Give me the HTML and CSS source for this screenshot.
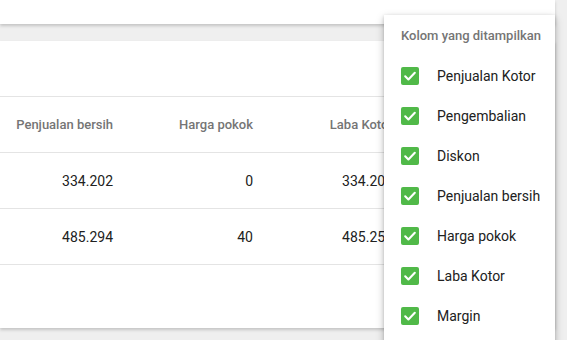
FILE: index.html
```
<!DOCTYPE html>
<html>
<head>
<meta charset="utf-8">
<link rel="stylesheet" href="styles.css">
</head>
<body>
<div class="page">
  <div class="topcard"><span class="toptext">31 Mar</span></div>
  <div class="card">
    <div class="cardhead"></div>
    <div class="row head">
      <div class="cell first">Penjualan bersih</div>
      <div class="cell">Harga pokok</div>
      <div class="cell">Laba Kotor</div>
    </div>
    <div class="row">
      <div class="cell first">334.202</div>
      <div class="cell">0</div>
      <div class="cell">334.202</div>
    </div>
    <div class="row">
      <div class="cell first">485.294</div>
      <div class="cell">40</div>
      <div class="cell">485.254</div>
    </div>
  </div>
</div>
<div class="menu">
  <div class="menutitle">Kolom yang ditampilkan</div>
  <div class="item"><span class="cb"><svg viewBox="0 0 18 18" width="18" height="18"><path d="M4.2 9.3l3.2 3.1 6.4-6.6" fill="none" stroke="#fff" stroke-width="2.1" stroke-linecap="round" stroke-linejoin="round"/></svg></span><span>Penjualan Kotor</span></div>
  <div class="item"><span class="cb"><svg viewBox="0 0 18 18" width="18" height="18"><path d="M4.2 9.3l3.2 3.1 6.4-6.6" fill="none" stroke="#fff" stroke-width="2.1" stroke-linecap="round" stroke-linejoin="round"/></svg></span><span>Pengembalian</span></div>
  <div class="item"><span class="cb"><svg viewBox="0 0 18 18" width="18" height="18"><path d="M4.2 9.3l3.2 3.1 6.4-6.6" fill="none" stroke="#fff" stroke-width="2.1" stroke-linecap="round" stroke-linejoin="round"/></svg></span><span>Diskon</span></div>
  <div class="item"><span class="cb"><svg viewBox="0 0 18 18" width="18" height="18"><path d="M4.2 9.3l3.2 3.1 6.4-6.6" fill="none" stroke="#fff" stroke-width="2.1" stroke-linecap="round" stroke-linejoin="round"/></svg></span><span>Penjualan bersih</span></div>
  <div class="item"><span class="cb"><svg viewBox="0 0 18 18" width="18" height="18"><path d="M4.2 9.3l3.2 3.1 6.4-6.6" fill="none" stroke="#fff" stroke-width="2.1" stroke-linecap="round" stroke-linejoin="round"/></svg></span><span>Harga pokok</span></div>
  <div class="item"><span class="cb"><svg viewBox="0 0 18 18" width="18" height="18"><path d="M4.2 9.3l3.2 3.1 6.4-6.6" fill="none" stroke="#fff" stroke-width="2.1" stroke-linecap="round" stroke-linejoin="round"/></svg></span><span>Laba Kotor</span></div>
  <div class="item"><span class="cb"><svg viewBox="0 0 18 18" width="18" height="18"><path d="M4.2 9.3l3.2 3.1 6.4-6.6" fill="none" stroke="#fff" stroke-width="2.1" stroke-linecap="round" stroke-linejoin="round"/></svg></span><span>Margin</span></div>
</div>
</body>
</html>
```
FILE: styles.css
```
html, body {
  margin: 0;
  padding: 0;
  height: 100%;
  overflow: hidden;
}
body {
  background: #efefef;
  font-family: Roboto, "Liberation Sans", sans-serif;
  color: #212121;
}
.page {
  width: 555px;
  display: flex;
  flex-direction: column;
  gap: 17px;
}
.topcard {
  height: 24px;
  background: #fff;
  box-shadow: 0 2px 3px rgba(0,0,0,0.18);
  overflow: hidden;
}
.toptext {
  display: block;
  margin-top: -13px;
  padding-left: 233px;
  font-size: 14px;
  line-height: 14px;
  color: #333;
}
.card {
  height: 287px;
  background: #fff;
  box-shadow: 0 2px 3px rgba(0,0,0,0.18);
  overflow: hidden;
}
.cardhead {
  height: 55px;
  border-bottom: 1px solid #e4e4e4;
}
.row {
  display: flex;
  height: 55px;
  align-items: center;
  border-bottom: 1px solid #e4e4e4;
  font-size: 14px;
  white-space: nowrap;
}
.row.head {
  font-size: 13px;
  font-weight: 500;
  color: #757575;
}
.cell {
  width: 140px;
  flex: none;
  text-align: right;
}
.cell.first {
  width: 113px;
}
.menu {
  position: absolute;
  left: 384px;
  top: 15px;
  width: 171px;
  height: 340px;
  background: #fff;
  box-shadow: 0 3px 8px rgba(0,0,0,0.25), 0 1px 3px rgba(0,0,0,0.15);
}
.menutitle {
  padding: 13px 0 0 17px;
  height: 28px;
  font-size: 13px;
  font-weight: 500;
  color: #757575;
}
.item {
  display: flex;
  align-items: center;
  height: 40px;
  padding-left: 17px;
  font-size: 14px;
  color: #212121;
}
.cb {
  width: 18px;
  height: 18px;
  border-radius: 2px;
  background: #50b948;
  margin-right: 18px;
  display: flex;
}
```
